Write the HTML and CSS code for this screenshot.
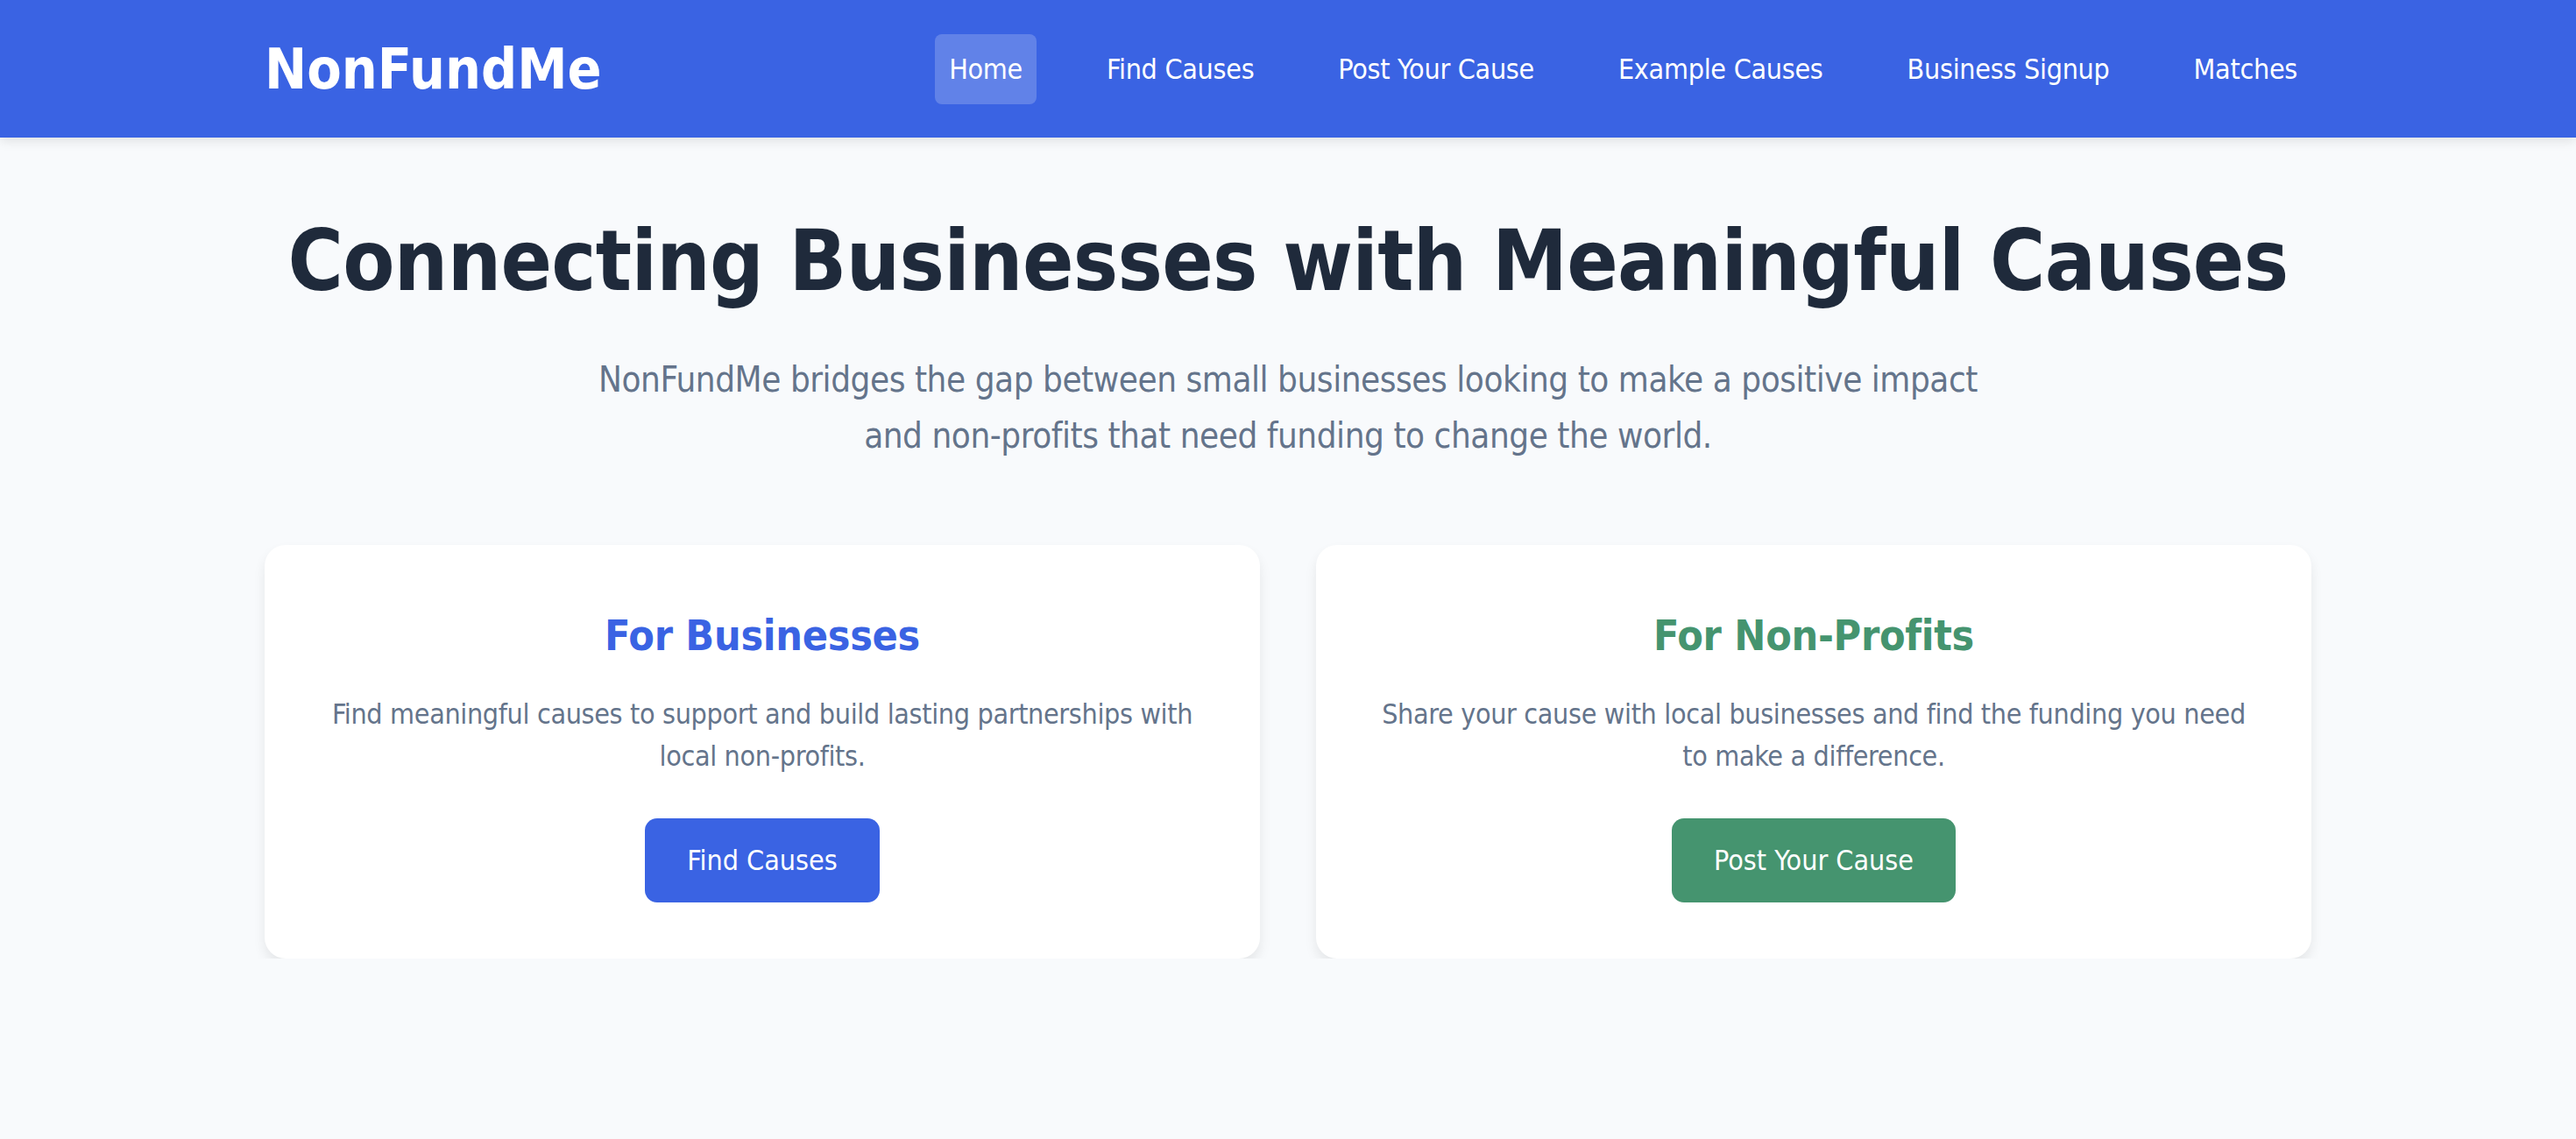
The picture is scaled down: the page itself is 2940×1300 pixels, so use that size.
FILE: index.html
```html
<!DOCTYPE html>
<html lang="en">
<head>
<meta charset="utf-8">
<title>NonFundMe</title>
<link rel="stylesheet" href="styles.css">
</head>
<body>
<header class="site-header">
  <div class="container nav-bar">
    <div class="logo">NonFundMe</div>
    <nav class="nav-links">
      <a class="nav-link active" href="#">Home</a>
      <a class="nav-link" href="#">Find Causes</a>
      <a class="nav-link" href="#">Post Your Cause</a>
      <a class="nav-link" href="#">Example Causes</a>
      <a class="nav-link" href="#">Business Signup</a>
      <a class="nav-link" href="#">Matches</a>
    </nav>
  </div>
</header>
<main class="container main">
  <section class="hero">
    <h1 class="hero-title">Connecting Businesses with Meaningful Causes</h1>
    <p class="hero-sub">NonFundMe bridges the gap between small businesses looking to make a positive impact and non-profits that need funding to change the world.</p>
  </section>
  <section class="cards">
    <div class="card">
      <h2 class="card-title blue">For Businesses</h2>
      <p class="card-text">Find meaningful causes to support and build lasting partnerships with local non-profits.</p>
      <a class="btn btn-blue" href="#">Find Causes</a>
    </div>
    <div class="card">
      <h2 class="card-title green">For Non-Profits</h2>
      <p class="card-text">Share your cause with local businesses and find the funding you need to make a difference.</p>
      <a class="btn btn-green" href="#">Post Your Cause</a>
    </div>
  </section>
</main>
</body>
</html>
```
FILE: styles.css
```css
* { box-sizing: border-box; }

body {
  margin: 0;
  background: #f8fafc;
  font-family: "DejaVu Sans Condensed", "DejaVu Sans", sans-serif;
  font-stretch: condensed;
  color: #1e293b;
}

.container {
  max-width: 2400px;
  margin: 0 auto;
  padding: 0 32px;
}

.site-header {
  background: #3a63e3;
  box-shadow: 0 4px 12px rgba(0, 0, 0, 0.1);
}

.nav-bar {
  height: 157px;
  display: flex;
  justify-content: space-between;
  align-items: center;
}

.logo {
  color: #ffffff;
  font-size: 64px;
  font-weight: bold;
}

.nav-links {
  display: flex;
  gap: 64px;
  align-items: center;
}

.nav-link {
  color: #ffffff;
  text-decoration: none;
  font-size: 32px;
  line-height: 48px;
  letter-spacing: -0.3px;
  padding: 16px;
  border-radius: 8px;
}

.nav-link.active {
  background: rgba(255, 255, 255, 0.2);
}

.main {
  padding-top: 84px;
}

.hero {
  text-align: center;
}

.hero-title {
  margin: 0 0 45px;
  font-size: 96px;
  line-height: 115px;
  letter-spacing: -0.7px;
  font-weight: bold;
  color: #1f2a3b;
}

.hero-sub {
  margin: 0 auto;
  max-width: 1600px;
  font-size: 40px;
  line-height: 64px;
  letter-spacing: -0.45px;
  color: #64748b;
}

.cards {
  margin-top: 93px;
  display: grid;
  grid-template-columns: 1fr 1fr;
  gap: 64px;
}

.card {
  background: #ffffff;
  border-radius: 24px;
  padding: 64px;
  text-align: center;
  box-shadow: 0 8px 14px rgba(0, 0, 0, 0.08);
}

.card-title {
  margin: 0;
  font-size: 48px;
  line-height: 78px;
  letter-spacing: -0.3px;
  font-weight: bold;
}

.card-title.blue { color: #3a63e3; }
.card-title.green { color: #45946f; }

.card-text {
  margin: 27px 0 47px;
  font-size: 32px;
  line-height: 48px;
  letter-spacing: -0.35px;
  color: #64748b;
}

.btn {
  display: inline-block;
  padding: 24px 48px;
  border-radius: 14px;
  font-size: 32px;
  line-height: 48px;
  color: #ffffff;
  text-decoration: none;
}

.btn-blue { background: #3a63e3; }
.btn-green { background: #45946f; }
```
